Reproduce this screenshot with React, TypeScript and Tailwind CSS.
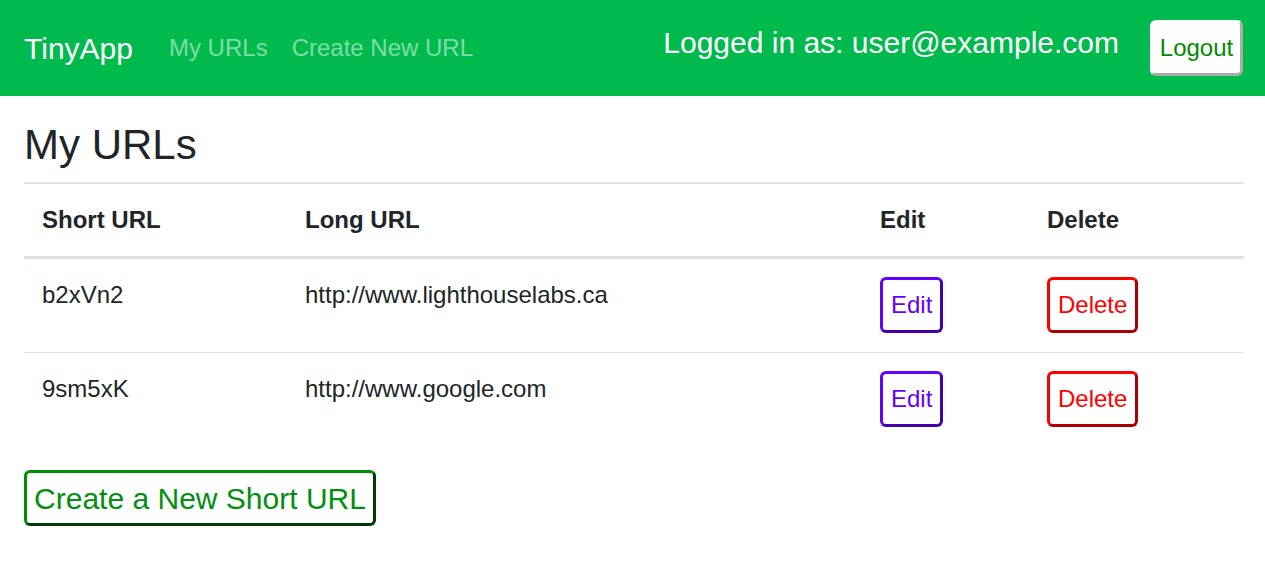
import React from "react";

const urls = [
  { id: "b2xVn2", longURL: "http://www.lighthouselabs.ca" },
  { id: "9sm5xK", longURL: "http://www.google.com" },
];

const App = () => {
  return (
    <div className="min-h-screen bg-white text-[24px] leading-[36px] text-[#212529] font-['Liberation_Sans',Arial,sans-serif]">
      <nav className="flex h-24 items-center bg-[#00ba4d] pl-6 pr-[22px]">
        <a href="#" className="mr-6 text-[30px] leading-[45px] text-white">
          TinyApp
        </a>
        <a href="#" className="px-3 text-white/50">
          My URLs
        </a>
        <a href="#" className="px-3 text-white/50">
          Create New URL
        </a>

        <div className="ml-auto flex items-center">
          <h5 className="mb-3 text-[30px] leading-[45px] font-normal text-white">
            Logged in as: user@example.com
          </h5>
          <button className="ml-[31px] h-14 w-[93px] rounded-md border-[3px] border-white bg-white text-[#008a00] [border-style:outset]">
            Logout
          </button>
        </div>
      </nav>

      <main className="pl-6 pr-[21px]">
        <h3 className="mt-6 mb-3 text-[42px] leading-[50px] font-normal">
          My URLs
        </h3>

        <table className="w-full table-fixed border-collapse">
          <colgroup>
            <col className="w-[263px]" />
            <col className="w-[575px]" />
            <col className="w-[167px]" />
            <col />
          </colgroup>
          <thead>
            <tr>
              <th className="border-t-2 border-b-[3px] border-[#dee2e6] p-[18px] text-left font-bold">
                Short URL
              </th>
              <th className="border-t-2 border-b-[3px] border-[#dee2e6] p-[18px] text-left font-bold">
                Long URL
              </th>
              <th className="border-t-2 border-b-[3px] border-[#dee2e6] p-[18px] text-left font-bold">
                Edit
              </th>
              <th className="border-t-2 border-b-[3px] border-[#dee2e6] p-[18px] text-left font-bold">
                Delete
              </th>
            </tr>
          </thead>
          <tbody>
            {urls.map((url, index) => (
              <tr
                key={url.id}
                className={index > 0 ? "border-t border-[#dee2e6]" : ""}
              >
                <td className="px-[18px] pt-[18px] pb-[19px] align-top">{url.id}</td>
                <td className="px-[18px] pt-[18px] pb-[19px] align-top">{url.longURL}</td>
                <td className="px-[18px] pt-[18px] pb-[19px] align-top">
                  <button className="h-14 rounded-md border-[3px] border-[#6400ff] bg-white px-[8px] text-[#6400ff] [border-style:outset]">
                    Edit
                  </button>
                </td>
                <td className="px-[18px] pt-[18px] pb-[19px] align-top">
                  <button className="h-14 rounded-md border-[3px] border-[#ff0000] bg-white px-[8px] text-[#ff0000] [border-style:outset]">
                    Delete
                  </button>
                </td>
              </tr>
            ))}
          </tbody>
        </table>

        <button className="mt-6 h-14 w-[352px] rounded-md border-[3px] border-[#008f00] bg-white text-[30px] leading-[45px] text-[#008f10] [border-style:outset]">
          Create a New Short URL
        </button>
      </main>
    </div>
  );
};

export default App;
